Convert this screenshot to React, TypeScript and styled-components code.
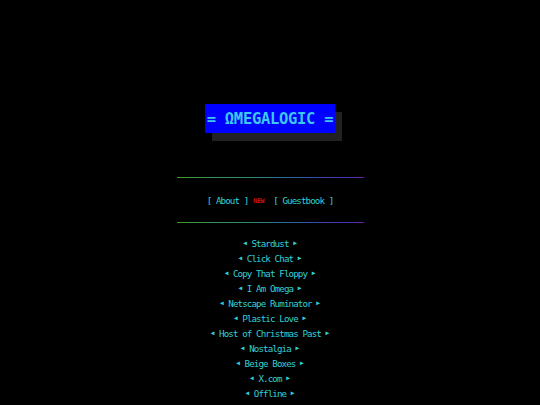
import React from "react";
import styled, { createGlobalStyle } from "styled-components";

const Global = createGlobalStyle`
  html, body { margin: 0; padding: 0; background: #000; }
  body { font-family: "DejaVu Sans Mono", "Liberation Mono", monospace; }
`;

const Page = styled.main`
  display: flex;
  flex-direction: column;
  align-items: center;
  padding-top: 104px;
  min-height: 100vh;
  box-sizing: border-box;
  background: #000;
`;

const Title = styled.h1`
  margin: 0;
  width: 130px;
  height: 29px;
  display: flex;
  align-items: center;
  justify-content: center;
  background: #0000ff;
  color: #3cc8f0;
  font-family: "DejaVu Sans Mono", monospace;
  font-weight: bold;
  font-size: 15.5px;
  letter-spacing: -0.3px;
  white-space: pre;
  box-shadow: 7px 8px 0 #222;
`;

const Rule = styled.hr`
  margin: 0;
  border: 0;
  width: 187px;
  height: 1px;
  background: linear-gradient(to right, #3f9a2a, #2f8a78 40%, #3050b0 72%, #6020a8);
`;

const NavBlock = styled.nav`
  margin-top: 44px;
  display: flex;
  flex-direction: column;
  align-items: center;
`;

const NavRow = styled.div`
  height: 44px;
  display: flex;
  align-items: center;
  white-space: pre;
`;

const LinkText = styled.a`
  color: #32d0d8;
  text-decoration: none;
  font-size: 9.2px;
  letter-spacing: -0.9px;
  white-space: pre;
  line-height: 15px;
  display: inline-flex;
  align-items: center;
`;

const Arrow = styled.span`
  font-size: 6.5px;
  letter-spacing: 0;
`;

const NewTag = styled.span`
  display: block;
  box-sizing: border-box;
  height: 15px;
  line-height: 15px;
  padding-top: 1.5px;
  color: #d01010;
  font-size: 6.5px;
  letter-spacing: -0.3px;
  margin: 0 9px 0 5px;
  font-weight: bold;
`;

const List = styled.ul`
  list-style: none;
  margin: 13px 0 0 0;
  padding: 0;
  display: flex;
  flex-direction: column;
  align-items: center;
`;

const Item = styled.li`
  height: 15px;
  display: flex;
  align-items: center;
`;

const items = [
  "Stardust",
  "Click Chat",
  "Copy That Floppy",
  "I Am Omega",
  "Netscape Ruminator",
  "Plastic Love",
  "Host of Christmas Past",
  "Nostalgia",
  "Beige Boxes",
  "X.com",
  "Offline",
  "Internet Archive",
];

export default function App() {
  return (
    <>
      <Global />
      <Page>
        <Title>= ΩMEGALOGIC =</Title>
        <NavBlock>
          <Rule />
          <NavRow>
            <LinkText href="#">[ About ]</LinkText>
            <NewTag>NEW</NewTag>
            <LinkText href="#">[ Guestbook ]</LinkText>
          </NavRow>
          <Rule />
        </NavBlock>
        <List>
          {items.map((t) => (
            <Item key={t}>
              <LinkText href="#">
                <Arrow>◀</Arrow>
                {` ${t} `}
                <Arrow>▶</Arrow>
              </LinkText>
            </Item>
          ))}
        </List>
      </Page>
    </>
  );
}
